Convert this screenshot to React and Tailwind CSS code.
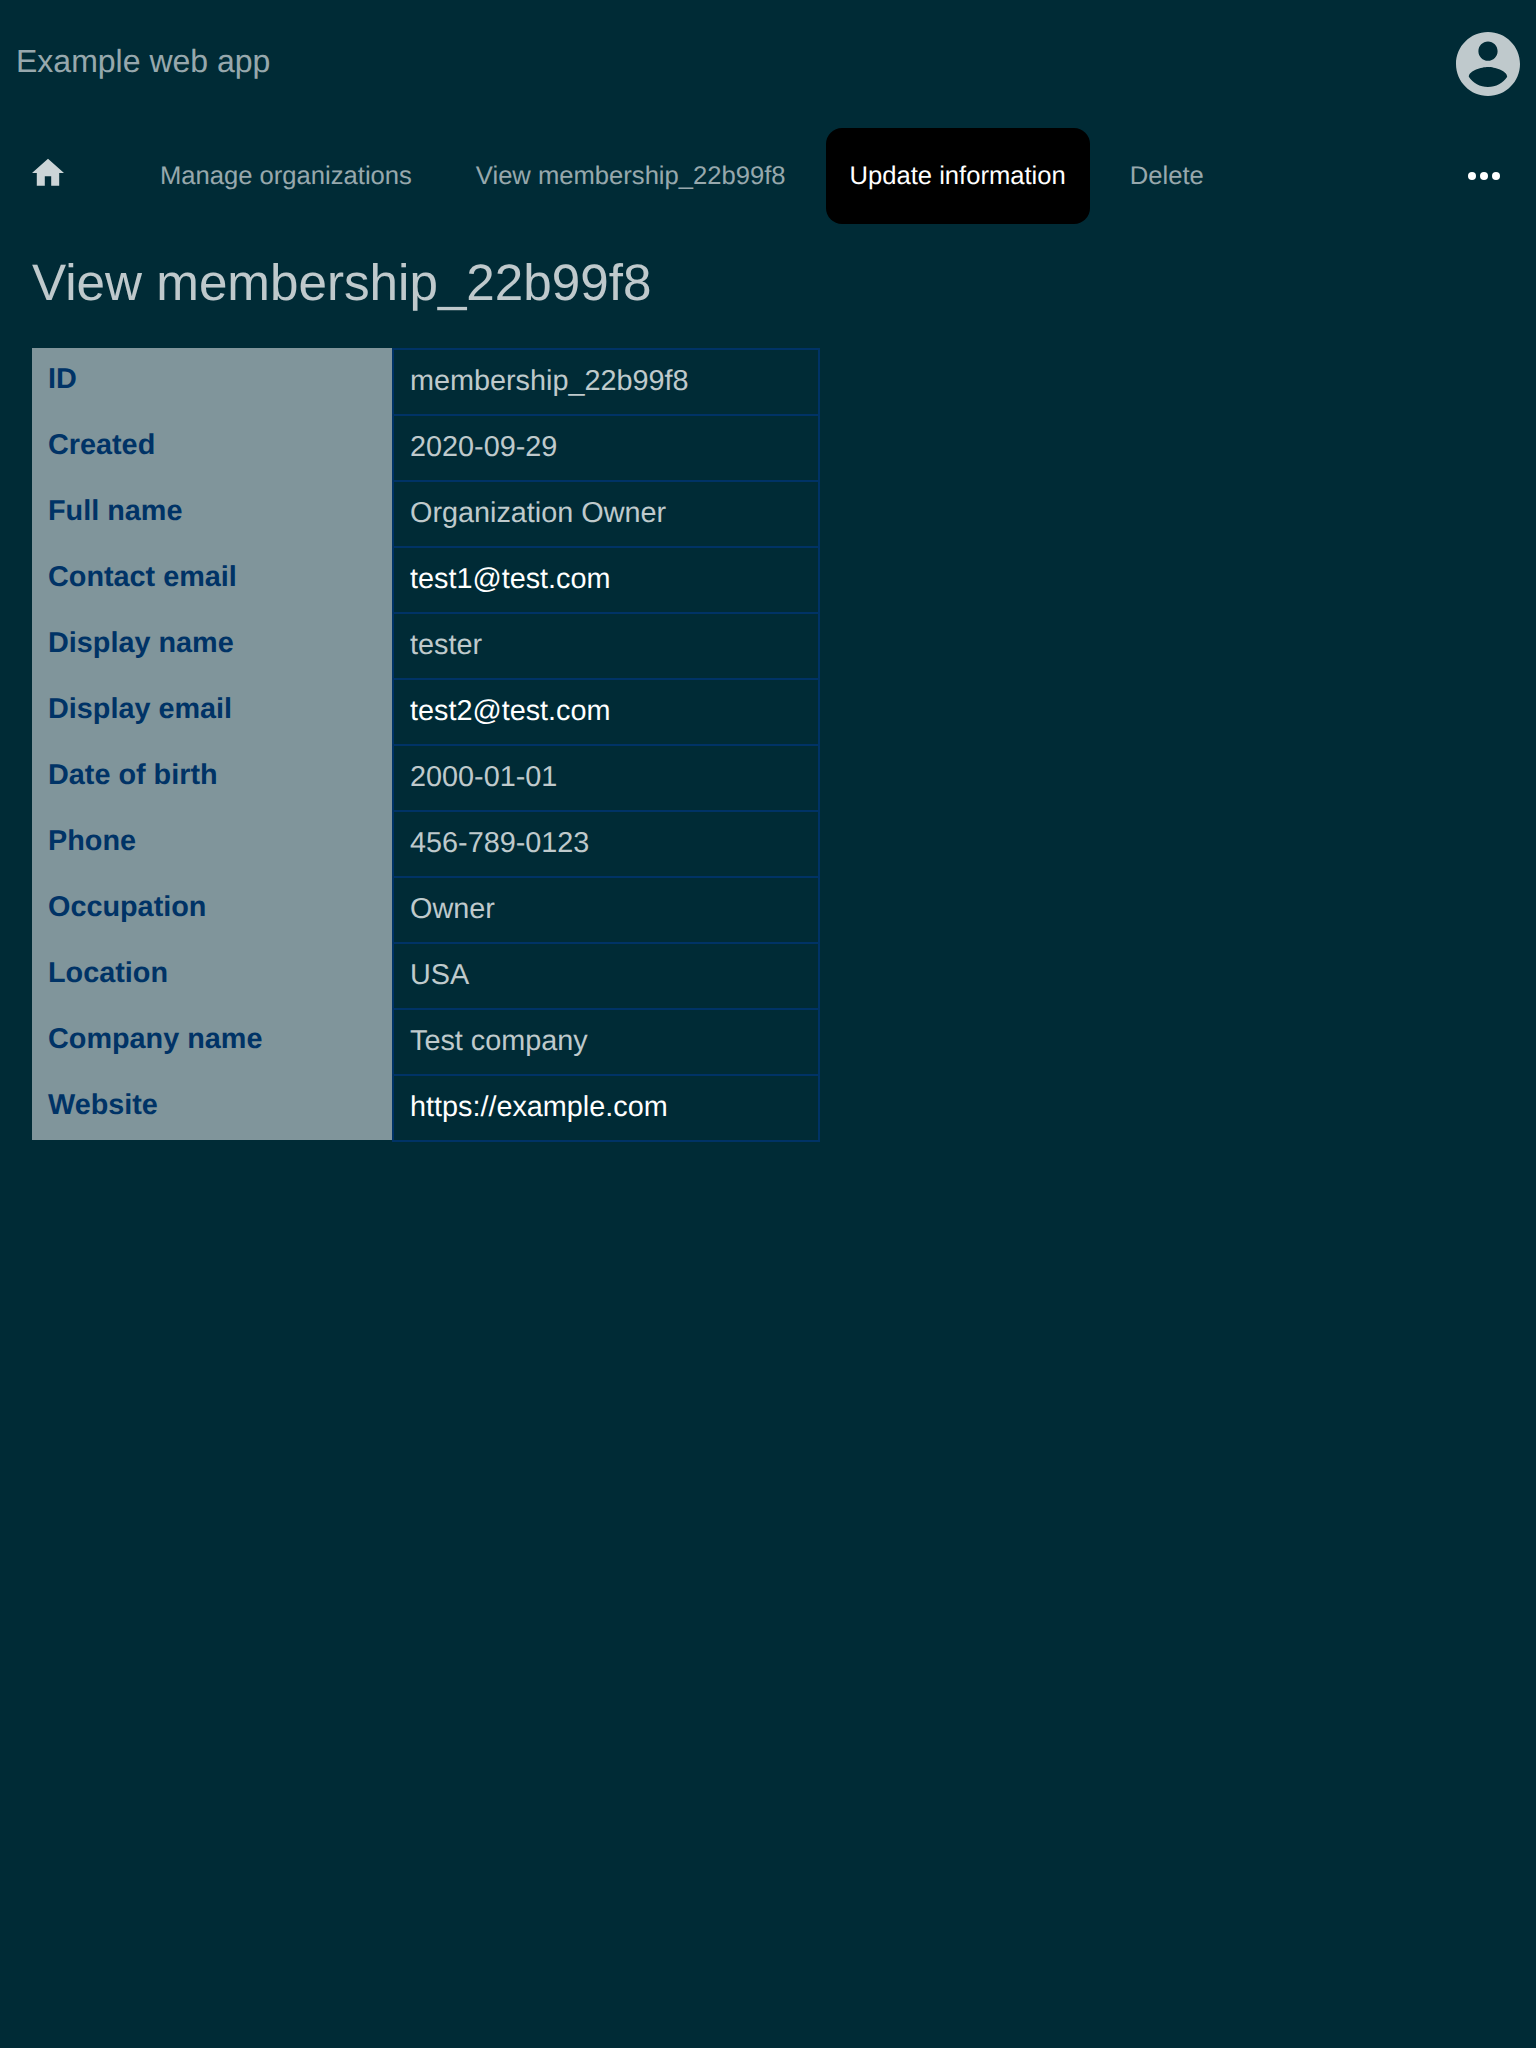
const rows = [
  { label: 'ID', value: 'membership_22b99f8' },
  { label: 'Created', value: '2020-09-29' },
  { label: 'Full name', value: 'Organization Owner' },
  { label: 'Contact email', value: 'test1@test.com', href: 'mailto:test1@test.com' },
  { label: 'Display name', value: 'tester' },
  { label: 'Display email', value: 'test2@test.com', href: 'mailto:test2@test.com' },
  { label: 'Date of birth', value: '2000-01-01' },
  { label: 'Phone', value: '456-789-0123' },
  { label: 'Occupation', value: 'Owner' },
  { label: 'Location', value: 'USA' },
  { label: 'Company name', value: 'Test company' },
  { label: 'Website', value: 'https://example.com', href: '#website' },
];

const links = [
  { text: 'Manage organizations' },
  { text: 'View membership_22b99f8' },
  { text: 'Update information', active: true },
  { text: 'Delete' },
];

function AccountIcon() {
  return (
    <svg viewBox="2 2 20 20" className="size-16 fill-white/75">
      <path d="M12 2C6.48 2 2 6.48 2 12s4.48 10 10 10 10-4.48 10-10S17.52 2 12 2zm0 3c1.66 0 3 1.34 3 3s-1.34 3-3 3-3-1.34-3-3 1.34-3 3-3zm0 14.2c-2.5 0-4.71-1.28-6-3.22.03-1.99 4-3.08 6-3.08s5.97 1.09 6 3.08c-1.29 1.94-3.5 3.22-6 3.22z" />
    </svg>
  );
}

function HomeIcon() {
  return (
    <svg viewBox="2 2.6 20 17.5" className="mb-2 h-7 w-8 fill-white/80">
      <path d="M10 20v-6h4v6h5v-8h3L12 3 2 12h3v8z" />
    </svg>
  );
}

function MoreIcon() {
  return (
    <svg viewBox="0 0 32 8" className="h-2 w-8 fill-white">
      <circle cx="4" cy="4" r="4" />
      <circle cx="16" cy="4" r="4" />
      <circle cx="28" cy="4" r="4" />
    </svg>
  );
}

function Header() {
  return (
    <header className="flex h-32 items-center justify-between px-4">
      <span className="mb-1.5 text-[32px] leading-10 text-white/60">Example web app</span>
      <button aria-label="Account">
        <AccountIcon />
      </button>
    </header>
  );
}

function Nav() {
  return (
    <nav className="flex h-24 items-center pr-9 pl-8">
      <a aria-label="Home">
        <HomeIcon />
      </a>
      <div className="ml-[72px] flex flex-1 gap-4 text-[25.6px]">
        {links.map((link) => (
          <a
            key={link.text}
            className={
              link.active
                ? 'flex h-24 items-center rounded-2xl bg-black px-6 text-white'
                : 'flex h-24 items-center px-6 text-white/60'
            }
          >
            {link.text}
          </a>
        ))}
      </div>
      <button aria-label="More">
        <MoreIcon />
      </button>
    </nav>
  );
}

function Details() {
  return (
    <dl className="mt-[33px] ml-8 flex w-[788px] text-[28.8px] leading-8">
      <div className="mb-0.5 w-[360px] bg-white/50 font-bold text-[#003366]">
        {rows.map((row) => (
          <dt key={row.label} className="h-[66px] px-4 pt-[15px]">
            {row.label}
          </dt>
        ))}
      </div>
      <div className="flex-1 border-x-2 border-t-2 border-[#003366] text-white/75">
        {rows.map((row) => (
          <dd key={row.label} className="h-[66px] border-b-2 border-[#003366] px-4 pt-[15px]">
            {row.href ? <a className="text-white">{row.value}</a> : row.value}
          </dd>
        ))}
      </div>
    </dl>
  );
}

export default function App() {
  return (
    <div className="min-h-screen bg-[#002b36] font-['Liberation_Sans',Arial,sans-serif] [text-rendering:geometricPrecision]">
      <Header />
      <Nav />
      <main>
        <h1 className="mt-[27px] ml-8 text-[51.2px] leading-16 text-white/75">View membership_22b99f8</h1>
        <Details />
      </main>
    </div>
  );
}
